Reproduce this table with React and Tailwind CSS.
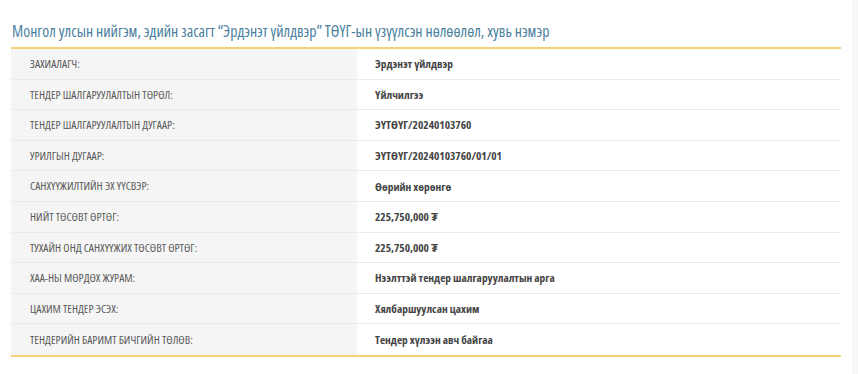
const rows = [
  ['ЗАХИАЛАГЧ:', 'Эрдэнэт үйлдвэр'],
  ['ТЕНДЕР ШАЛГАРУУЛАЛТЫН ТӨРӨЛ:', 'Үйлчилгээ'],
  ['ТЕНДЕР ШАЛГАРУУЛАЛТЫН ДУГААР:', 'ЭҮТӨҮГ/20240103760'],
  ['УРИЛГЫН ДУГААР:', 'ЭҮТӨҮГ/20240103760/01/01'],
  ['САНХҮҮЖИЛТИЙН ЭХ ҮҮСВЭР:', 'Өөрийн хөрөнгө'],
  ['НИЙТ ТӨСӨВТ ӨРТӨГ:', '225,750,000 ₮'],
  ['ТУХАЙН ОНД САНХҮҮЖИХ ТӨСӨВТ ӨРТӨГ:', '225,750,000 ₮'],
  ['ХАА-НЫ МӨРДӨХ ЖУРАМ:', 'Нээлттэй тендер шалгаруулалтын арга'],
  ['ЦАХИМ ТЕНДЕР ЭСЭХ:', 'Хялбаршуулсан цахим'],
  ['ТЕНДЕРИЙН БАРИМТ БИЧГИЙН ТӨЛӨВ:', 'Тендер хүлээн авч байгаа'],
];

export default function App() {
  return (
    <div className="flex h-[374px] w-[858px] bg-white font-['Open_Sans',sans-serif] font-stretch-condensed">
      <div className="flex-1 pl-[11px] pr-[11px] pt-[22px]">
        <h2 className="mb-[6px] pl-px text-[15.8px] leading-[19px] text-[#4a7f9e]">
          Монгол улсын нийгэм, эдийн засагт “Эрдэнэт үйлдвэр” ТӨҮГ-ын үзүүлсэн нөлөөлөл, хувь нэмэр
        </h2>
        <div className="border-y-2 border-[#f3d27a]">
          {rows.map(([label, value], i) => (
            <div key={i} className="flex h-[30.6px]">
              <div
                className={`flex w-[346px] items-center bg-[#f5f5f5] pl-[19px] text-[11.6px] text-[#5a5a5a] ${i < rows.length - 1 ? 'border-b border-[#ebebeb]' : ''}`}
              >
                {label}
              </div>
              <div
                className={`flex flex-1 items-center pl-[18px] text-[11.4px] font-bold text-[#444] ${i < rows.length - 1 ? 'border-b border-[#ebebeb]' : ''}`}
              >
                {value}
              </div>
            </div>
          ))}
        </div>
      </div>
      <div className="w-[6px] bg-[#f7f7f7]" />
    </div>
  );
}
